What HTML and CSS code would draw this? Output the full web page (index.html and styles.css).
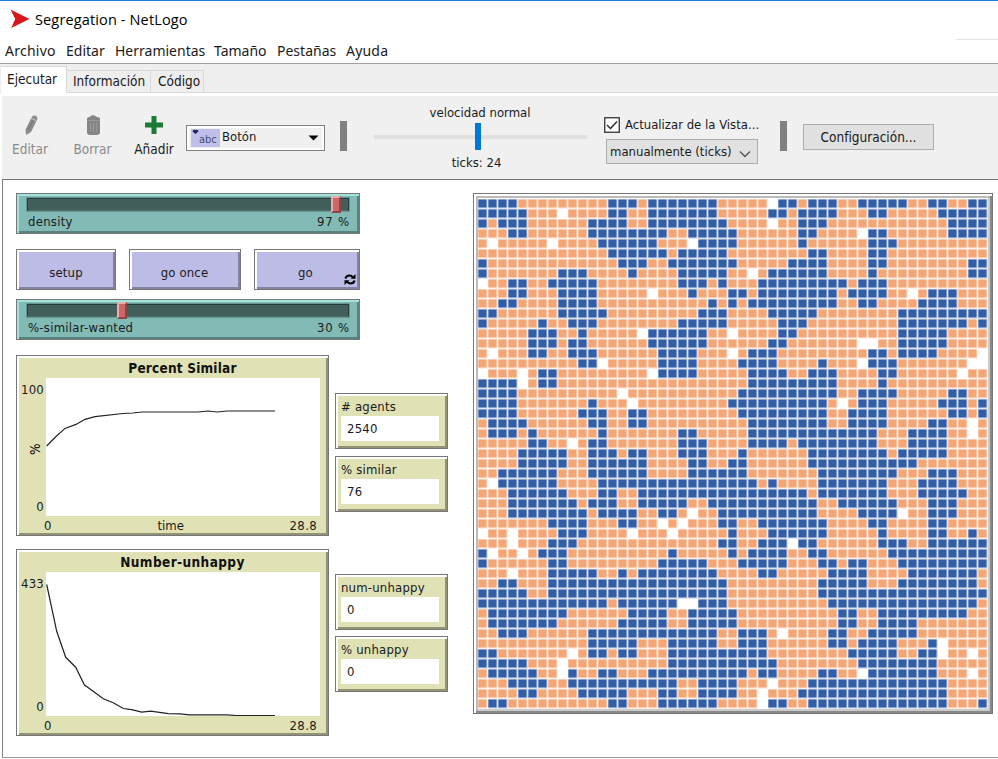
FILE: index.html
```html
<!DOCTYPE html>
<html lang="es">
<head>
<meta charset="utf-8">
<title>Segregation - NetLogo</title>
<link rel="stylesheet" href="styles.css">
</head>
<body>
<div class="window">
  <header class="titlebar">
    <svg class="logo" viewBox="0 0 20 20"><path d="M0.5 0.5L19.5 10L1.2 19L5.2 10Z" fill="#d6181c"/></svg>
    <span class="title">Segregation - NetLogo</span>
  </header>
  <nav class="menubar">
    <span class="m1">Archivo</span><span class="m2">Editar</span><span class="m3">Herramientas</span><span class="m4">Tamaño</span><span class="m5">Pestañas</span><span class="m6">Ayuda</span>
  </nav>
  <div class="tabs">
    <span class="tab active">Ejecutar</span><span class="tab info">Información</span><span class="tab code">Código</span>
  </div>
  <div class="toolbar">
    <div class="tool edit">
      <svg viewBox="0 0 20 20"><path d="M10.6 2.2L12.3 0.6Q15.5 0.4 16.4 2.2L16.2 4.4L10 17L5 20L4.6 14.6Z" fill="#8b8b8b"/><path d="M10 3.2L15.4 5.6" stroke="#c9c9c9" stroke-width="1"/><path d="M7.2 15L12 6" stroke="#777" stroke-width="1"/></svg>
      <span>Editar</span>
    </div>
    <div class="tool delete">
      <svg viewBox="0 0 20 20"><path d="M6 1.5Q9 -1 12 1.5L16 3V5H3V3Z" fill="#858585"/><path d="M3 5H16V18Q15 20 13 20H6Q3.500 20 3 18Z" fill="#858585"/><path d="M3 5.500H16M6.500 8V17M9.500 8V17M12.500 8V17" stroke="#999"/></svg>
      <span>Borrar</span>
    </div>
    <div class="tool add">
      <svg viewBox="0 0 20 20"><path d="M7.500 1H12.500V7.500H19V12.500H12.500V19H7.500V12.500H1V7.500H7.500Z" fill="#1d7a34"/></svg>
      <span>Añadir</span>
    </div>
    <div class="widget-select">
      <span class="swatch"><svg viewBox="0 0 8 6"><path d="M0.500 2.500Q1 0 3.500 1Q6 0 6.500 2.500L3.500 5Z" fill="#26265e"/></svg>abc</span>
      <span class="choice">Botón</span>
      <svg class="arrow" viewBox="0 0 10 6"><path d="M0 0.500H10L5 5.500Z" fill="#000"/></svg>
    </div>
    <div class="divider first"></div>
    <div class="speed">
      <span class="speed-label">velocidad normal</span>
      <div class="track"><div class="thumb"></div></div>
      <span class="ticks">ticks: 24</span>
    </div>
    <div class="updates">
      <div class="check-row">
        <svg class="check" viewBox="0 0 16 16"><rect x="0.750" y="0.750" width="14.500" height="14.500" fill="#fff" stroke="#333" stroke-width="1.300"/><path d="M3 8L6.500 11.500L13 4.500" fill="none" stroke="#222" stroke-width="1.400"/></svg>
        <span>Actualizar de la Vista...</span>
      </div>
      <div class="mode"><span>manualmente (ticks)</span><svg viewBox="0 0 12 8"><path d="M1 1.500L6 6.500L11 1.500" fill="none" stroke="#555" stroke-width="1.400"/></svg></div>
    </div>
    <div class="divider second"></div>
    <div class="settings">Configuración...</div>
  </div>
  <main class="workspace">
    <section class="controls">
      <div class="slider density">
        <div class="groove"><i class="knob high"></i></div>
        <div class="caption"><span>density</span><span>97 %</span></div>
      </div>
      <div class="buttons">
        <div class="btn">setup</div>
        <div class="btn">go once</div>
        <div class="btn forever">go
          <svg class="loop" viewBox="0 0 12 12"><path d="M1.500 5Q2.200 2 5.500 2Q7.500 2 8.800 3.800M10.500 7Q9.800 10 6.500 10Q4.500 10 3.200 8.200" fill="none" stroke="#000" stroke-width="2.200"/><path d="M11.500 0.500V5.300H6.700ZM0.500 11.500V6.700H5.300Z"/></svg>
        </div>
      </div>
      <div class="slider">
        <div class="groove"><i class="knob low"></i></div>
        <div class="caption"><span class="wanted">%-similar-wanted</span><span>30 %</span></div>
      </div>
      <div class="outputs">
        <div class="plots">
          <div class="plot percent">
            <div class="plot-title">Percent Similar</div>
            <div class="y-axis"><span>100</span><span class="y-name">%</span><span>0</span></div>
            <svg class="pen" viewBox="46 378 274 138"><path d="M46.700 446L56 436.500L65 428.400L76 424.400L85 419.300L95 416.700L123 413.500L133 413L142 412H198L208 411L217 412L227 411H275"/></svg>
            <div class="x-axis"><span>0</span><span>time</span><span>28.8</span></div>
          </div>
          <div class="plot unhappy">
            <div class="plot-title">Number-unhappy</div>
            <div class="y-axis"><span>433</span><span>0</span></div>
            <svg class="pen" viewBox="46 571.500 274 144"><path d="M46.700 584L56.700 630.800L65.700 656.800L75.700 666.700L84.300 684.300L103.300 698.200L113.300 702.200L123.300 708L131.700 709.200L141.700 711.700L150.700 710.600L168.300 713.200L180 713.400L189.300 714.400H227L236 715H275"/></svg>
            <div class="x-axis"><span>0</span><span>28.8</span></div>
          </div>
        </div>
        <div class="monitors">
          <div class="monitor"><label># agents</label><output>2540</output></div>
          <div class="monitor"><label>% similar</label><output>76</output></div>
          <div class="monitor third"><label>num-unhappy</label><output>0</output></div>
          <div class="monitor"><label>% unhappy</label><output>0</output></div>
        </div>
      </div>
    </section>
    <div class="view"><svg id="world" viewBox="0 0 510 510"></svg></div>
  </main>
</div>
<script src="world.js"></script>
</body>
</html>
```
FILE: styles.css
```css
* { box-sizing: border-box; }
body { margin: 0; background: #fff; color: #1a1a1a; font-family: "DejaVu Sans Condensed", "DejaVu Sans", sans-serif; font-stretch: condensed; font-size: 13.5px; }
svg { display: block; }
span, label, output { white-space: nowrap; }
.window { width: 998px; height: 759px; overflow: hidden; display: flex; flex-direction: column; border-top: 1px solid #1a7fd4; }

.titlebar { height: 39px; flex: none; display: flex; align-items: center; padding-left: 10px; background: linear-gradient(#e4e4e4, #e4e4e4) right bottom / 42px 1px no-repeat; }
.logo { width: 20px; height: 20px; margin-top: -3px; }
.title { margin: -2px 0 0 5px; font: 14.5px "Open Sans", sans-serif; letter-spacing: .14px; color: #000; }

.menubar { height: 24px; flex: none; display: flex; align-items: center; padding: 0 0 2px 5px; border-bottom: 1px solid #a0a0a0; font: 14px "Noto Sans", sans-serif; }
.menubar span { flex: none; }
.m1 { width: 61px; letter-spacing: .25px; } .m2 { width: 49px; } .m3 { width: 99px; } .m4 { width: 63px; } .m5 { width: 69px; } .m6 { width: 50px; letter-spacing: .2px; }

.tabs { height: 29px; flex: none; background: #eee; display: flex; align-items: flex-end; border-bottom: 1px solid #d9d9d9; padding-left: 1px; }
.tab { border: 1px solid #d9d9d9; border-left: 0; border-bottom: 0; height: 22px; line-height: 21px; flex: none; }
.tab.active { background: #fff; width: 66px; height: 27px; line-height: 25px; padding-left: 6px; margin-bottom: -1px; }
.tab.info { width: 84px; padding-left: 6px; }
.tab.code { width: 53px; padding-left: 7px; }

.toolbar { height: 87px; flex: none; background: #f0f0f0; border-top: 3px solid #fff; border-bottom: 1px solid #777; margin-left: 2px; display: flex; align-items: flex-start; }
.tool { display: flex; flex-direction: column; align-items: center; padding-top: 19px; line-height: 17px; color: #8a8a8a; flex: none; }
.tool svg { width: 20px; height: 20px; margin: 0 0 6px 2px; }
.edit { width: 56px; }
.delete { width: 69px; }
.add { width: 54px; color: #1a1a1a; }
.add svg { margin-left: 0; }
.widget-select { width: 139px; height: 26px; margin: 29px 0 0 5px; border: 1.500px solid #828282; box-shadow: inset 0 0 0 2px #fff; display: flex; align-items: center; padding: 0 5px 0 4px; flex: none; }
.swatch { width: 29px; height: 18px; background: #bfbfea; position: relative; font: 11px "DejaVu Sans Condensed", sans-serif; font-stretch: condensed; padding: 5px 0 0 8px; line-height: 12px; color: #4c4c73; }
.swatch svg { position: absolute; left: 1px; top: 0; width: 8px; height: 6px; }
.choice { margin-left: 2px; flex: 1; margin-top: -3px; font-size: 13px; }
.arrow { width: 11px; height: 6px; }
.divider { width: 7px; height: 30px; background: #808080; flex: none; margin-top: 25px; }
.first { margin-left: 15px; }
.speed { width: 213px; margin-left: 27px; padding-top: 9px; flex: none; display: flex; flex-direction: column; align-items: center; line-height: 16px; font-size: 13px; }
.track { width: 213px; height: 4px; background: #e0e0e0; margin: 14px 0 16px; }
.thumb { width: 6px; height: 27px; background: #0078d7; margin: -12px 0 0 101px; }
.speed-label { margin-left: -1px; }
.ticks { margin-left: -8px; }
.updates { margin-left: 17px; padding-top: 20px; width: 157px; flex: none; font-size: 13px; }
.check-row { display: flex; align-items: center; height: 17px; }
.check { width: 16px; height: 16px; margin-right: 5px; flex: none; }
.mode { margin: 6px 0 0 2px; width: 152px; height: 25px; background: #e1e1e1; border: 1px solid #adadad; display: flex; align-items: center; justify-content: space-between; padding: 0 6px 0 3px; }
.mode svg { width: 12px; height: 8px; margin-top: 4px; }
.second { margin-left: 19px; }
.settings { width: 131px; height: 26px; margin: 28px 0 0 16px; background: #e1e1e1; border: 1px solid #adadad; text-align: center; line-height: 24px; flex: none; }

.workspace { flex: 1; margin: 0 0 1px 2px; border-left: 1px solid #828282; border-bottom: 1px solid #999; display: flex; align-items: flex-start; padding: 13px 0 0 13px; }
.controls { width: 457px; flex: none; }
.slider { width: 344px; height: 41px; border: 1px solid #777; background: #82bab5; box-shadow: inset 2px 2px 0 #a4e3dc, inset -2px -2px 0 #58827e; padding: 3px 9px 0; }
.groove { height: 15px; background: #425f5c; border: 2px solid #263c3a; border-bottom-color: #536f6c; outline: 1px solid #679590; outline-offset: -1px; }
.knob { display: block; position: relative; width: 10px; height: 17px; top: -3px; background: #cd6767; border: 2px solid #8b4646; border-top-color: #efaaaa; border-left-color: #efaaaa; }
.high { margin-left: 303px; }
.low { margin-left: 89px; }
.caption { display: flex; justify-content: space-between; padding: 2px 0 0 2px; line-height: 16px; font-size: 13px; letter-spacing: .25px; }
.caption span:last-child { letter-spacing: .8px; }
.buttons { display: flex; gap: 13px; margin: 15px 0 9px; }
.btn { height: 41px; width: 100px; border: 1px solid #777; background: #bcbce6; box-shadow: inset 2px 2px 0 #fff, inset -2px -2px 0 #8383a1; text-align: center; line-height: 46px; font-size: 13px; letter-spacing: .15px; }
.btn:nth-child(2) { width: 112px; padding-right: 1px; }
.btn:nth-child(3) { width: 106px; padding-right: 3px; }
.forever { position: relative; }
.loop { position: absolute; right: 3px; bottom: 3px; width: 12px; height: 13px; }
.outputs { display: flex; margin-top: 15px; font-size: 13px; letter-spacing: .2px; }
.plots { width: 313px; margin-right: 6px; display: flex; flex-direction: column; gap: 13px; }
.plot { border: 1px solid #777; background: #e0e1b5; box-shadow: inset 2px 2px 0 #fff, inset -2px -2px 0 #929374; display: grid; grid-template-columns: 28px 274px; padding-left: 1px; }
.percent { height: 181px; grid-template-rows: 22px 138px 18px; }
.unhappy { height: 187px; grid-template-rows: 22px 144px 18px; }
.plot-title { grid-column: 1 / 3; padding-left: 27px; text-align: center; font-weight: bold; line-height: 24px; font-size: 13.500px; letter-spacing: .2px; color: #111; }
.unhappy .plot-title { letter-spacing: .4px; }
.y-axis { display: flex; flex-direction: column; justify-content: space-between; align-items: flex-end; padding: 4px 2px 1px 0; line-height: 16px; }
.y-name { transform: rotate(-90deg); margin-right: 3px; font-size: 13.500px; color: #000; }
.pen { width: 274px; height: 100%; background: #fff; }
.pen path { fill: none; stroke: #222; stroke-width: 1.200; }
.x-axis { grid-column: 2; display: flex; justify-content: space-between; margin-left: -2px; padding-right: 3px; line-height: 19px; letter-spacing: .35px; }
.x-axis span:nth-child(2):not(:last-child) { margin-right: 0; letter-spacing: 0; }
.monitors { width: 113px; padding-top: 38px; }
.monitor { width: 113px; height: 56px; margin-bottom: 6.500px; border: 1px solid #777; background: #e0e1b5; box-shadow: inset 2px 2px 0 #fff, inset -2px -2px 0 #929374; padding: 4px 0 0 5px; line-height: 18px; }
.third { margin-top: 62px; }
.monitor label { display: block; }
.monitor output { display: block; width: 98px; height: 25px; background: #fff; padding-left: 6px; line-height: 25px; }
.view { width: 520px; height: 521px; flex: none; border: 1px solid #777; padding: 5px 4px; background: #fff; box-shadow: inset 2px 2px 0 #fff, inset -2px -2px 0 #888, inset 4px 4px 0 #bbb, inset -4px -4px 0 #ccc; }
#world { width: 510px; height: 510px; background: #fff; }
.halo { opacity: .17; }
.blue { fill: #325ea8; }
.orange { fill: #f6a574; }
```
FILE: world.js
```js
// One string per patch row: B = blue turtle, o = orange turtle, w = empty patch.
const rows = `
BBBBoooooooooBBBo BBBBBBBooooowBBoB BBooBBBBBooBBooBB
BBBBBooowooooBBoo BBBBBBBoooooBBoBB BBoooBBoooooBBBBB
BoBBBooooooBBBBoo BBBBBBBBoooowooBB BooooooooooooBBBB
oooBBooooooBBBBBB BBooBBBBBooooooBB oooowBBooooooBBBB
owooooowooooBBBBB BooowBBBBooooooBo oooooBBBooooooooo
oooooooooooooBBBB BBoBBBBBooooooooB BooooBBoooooooooo
BoooooooooooooBBB ooBBBBBBBoooooBBB BooooBBooooooooBB
BoooooooBBBooooBo oooBBBBBoowoBBBBB BooooBoooooooooBB
wooBBooBBBBBooooo oooBBBoBoooBBBBBB BBBoBBBoooooooooo
oooBBoooBBBBooooo woooBoooBBoBBBBBB BBoBBBBoowoBBBooo
ooBBooooBBBBooooo ooooooBoBoBBBBBBB BBooBBooooBBBBooo
BBooooooBBBBBoooo oooooBBBooooBBBBB ooooooooBBBBBBBBB
BoooooBooBBBooooo oooBBBBBoooooBBBo ooooooooBBBBBBBoB
oooooBBBooBooooow BBBBBBoowooooBBoo ooooooooBBBBBoooo
oooooBBBoBBoooooo BBBBBBooooooBBooo oooowwooBBBBBoooo
owoooBBooBBBooooo oBBBBooowoBBBoooo oooooBBoBBBBoooow
ooooooooooBBwoooo oBBBBooooBBBBoooo BooowBBBoooooooww
wooowoBBooooooooo wBBBBoooooBBBBooB BBooooBBoooooowoo
BBBBwoBBooooooooo ooooooooooBBBBBBB BBooooBoooooooooo
BBBBoooooooooowoo oooooooooBBBBBBBB BBooBBBBoooooBBoo
BBBBoooooooBooowo ooooooooBBBBBBBBB BowoBBBoooooBBBoB
BBBBooooooBBBooBB oooooooooBBBBBBBB BooBBBBooooooBBoB
oBBBBooooooBBooBB ooooooooooBBBBBBB BooBBBBooooBBoowo
oBBBoBooooooBoooo oooBBoooooBBBBBBB BBBBBBoooBBBBoowo
oooooBBoowoBBoooo oooBBBooooBBBBoBB BBBBBBoooBBBBoooo
ooooBBBBBooBBBoBB oooBBBoooBooooooB BBBBBBBoBBBBBoooo
ooooBBBBBooBBBBBB ooooBBooBBooooooB BBBBBBBBBBooooooo
ooBBBBBBoooBBBBBB ooooBBBBBBooooooo BBBBBBBBoooBBBooo
owBBBBBBooooBBBBB BBBBBBBBBBBoBoooo BBBBBBBoooBBBBooo
oooBBBBBBoooBBooB BBBBBBBBBBBBBBBBo BBBBBBBoooBBBBBoo
oooBBBBBBBoBBBooB BBBBooBBBBBBBBBBB ooBBBBBBoooBBBooo
oooBBBBBBBBoBBBBo oBBowooBBBBBBBBBB ooooBBBBwooBBBooo
oooooooBBBBoooBBo owowoooBBooBBBBBB BooooBBooooBBoooo
woowooooBBBoooowo oowoooooBoooBBBBB BoooooBooooBBooBo
ooowoooBBBooooooo oooooooBBooBBBwBB ooooooBBBooBBBBBB
BwoowoBBBoooooooo ooBoooooBoBBBBooB BooooooBBBBBBBBBB
BooooooBBoooooooo oBBBBBoooBBBBBooo BBoBBoooBBBBBBBBB
ooowoooBBBBBooBoB BBBBBBBooooBBoooo oBBBBooooBBBBBBBo
ooBBoooBBBBBBBBBB BBBBBBBBooooooooo BBBBBoooBBBBBBBBo
BBBBBooBBBBBBBBBB BBBBBBBBooooooooo BBBBBBBBBBBBBBBBB
BBBBBBBBBBBBBoBBB BBBwwBBBooooooooo oBBBBBBBBBBBBBBBo
oBBBBBBBBooooooBB BBooBBBBBoooooooo ooBBooBBBBBBBBBoo
oBBBBBBBooooooBBB BBooBBBBBoooooooo ooBBooBBBBooooooo
ooBBBooooooBBBBBB BBBBBBBooBBBowooo oBBooBBBBBooooooo
oooooooooooBBBBBo ooBBBBBooBBBooooo oBBoBBBBoooBwoooo
BBooooooowoBBoBBo ooBBBBBBBBBBooooo oooBBBBBooBBwoowo
BBBBBooowoooooooo ooBBBBBBBBBBBoooo ooooBBBBBBBBooooo
oBBBBBoowBooBBooo BBBBBBBBBBoBBoooo BBoowBBBBBBBooowo
oooBBBBooBBBBBBBB BBBooBBBBooowoooB BBBBBBBBBBBBBoooo
ooooBBooooBBBBBoo oBBooBBBBoowoooBB BBBBBBBBBBBBBoooo
oBBooooooooooBBoo oBBBBBBoooowBBooB BBBBBBBBBBBBBoooB
`.trim().split("\n").map(line => line.replace(/ /g, ""));

const world = document.getElementById("world");
const NS = "http://www.w3.org/2000/svg";

function squares(kind, inset, size) {
  let d = "";
  rows.forEach((row, y) => [...row].forEach((cell, x) => {
    if (cell === kind) d += `M${x * 10 + inset} ${y * 10 + inset}h${size}v${size}h${-size}z`;
  }));
  return d;
}

function paint(kind, className, inset, size) {
  const path = document.createElementNS(NS, "path");
  path.setAttribute("class", className);
  path.setAttribute("d", squares(kind, inset, size));
  world.append(path);
}

for (const [kind, name] of [["B", "blue"], ["o", "orange"]]) {
  paint(kind, name + " halo", 0, 10);
  paint(kind, name, 0.4, 8.2);
}
```
